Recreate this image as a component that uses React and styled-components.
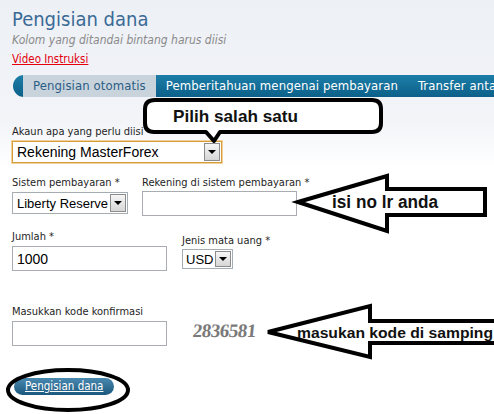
import React from "react";
import styled, { createGlobalStyle } from "styled-components";

const GlobalStyle = createGlobalStyle`
  html, body {
    margin: 0;
    padding: 0;
    background: #ffffff;
  }
  * {
    box-sizing: border-box;
  }
`;

const uiFont = `"DejaVu Sans Condensed", "DejaVu Sans", sans-serif`;
const fieldFont = `"Liberation Sans", Arial, sans-serif`;

const Page = styled.div`
  position: relative;
  width: 494px;
  height: 414px;
  overflow: hidden;
  padding: 7px 0 0 12px;
  font-family: ${uiFont};
  font-stretch: condensed;
  background: linear-gradient(#edf0f5 0px, #f2f4f8 120px, #ffffff 168px);
`;

const Title = styled.h1`
  margin: 0;
  font-size: 20px;
  line-height: 24px;
  font-weight: normal;
  color: #3b6a96;
`;

const Subtitle = styled.div`
  margin-top: 2px;
  font-size: 12px;
  line-height: 15px;
  font-style: italic;
  color: #8a8a8a;
`;

const VideoLink = styled.a`
  display: inline-block;
  margin-top: 2px;
  font-size: 11.5px;
  line-height: 14px;
  color: #e4000f;
  text-decoration: underline;
`;

const TabBar = styled.div`
  display: flex;
  margin: 8px 0 0 1px;
  height: 22px;
  padding-left: 10px;
  border-radius: 11px 0 0 11px;
  background: linear-gradient(#1d7ea8, #0b6089);
  white-space: nowrap;
`;

const Tab = styled.div`
  padding: 0 10px;
  line-height: 22px;
  font-size: 13px;
  letter-spacing: 0.1px;
  color: ${({ $active }) => ($active ? "#2b5d86" : "#ffffff")};
  background: ${({ $active }) => ($active ? "#c9d3dc" : "transparent")};
`;

const Form = styled.div`
  display: flex;
  flex-direction: column;
  margin-top: 28px;
`;

const Row = styled.div`
  display: flex;
  align-items: flex-start;
  gap: ${({ $gap }) => $gap ?? 14}px;
  margin-top: ${({ $top }) => $top ?? 0}px;
`;

const Field = styled.div`
  display: flex;
  flex-direction: column;
  margin-top: ${({ $top }) => $top ?? 0}px;
`;

const Label = styled.label`
  font-size: 11px;
  line-height: 13px;
  color: #1e1e1e;
  margin-bottom: ${({ $gap }) => $gap ?? 3}px;
`;

const TextInput = styled.input`
  width: ${({ $w }) => $w}px;
  height: 25px;
  padding: 0 4px;
  border: 1px solid #a9adb2;
  background: #ffffff;
  font-family: ${fieldFont};
  font-size: 14px;
  color: #000;
  outline: none;
`;

const SelectBox = styled.div`
  display: flex;
  align-items: center;
  width: ${({ $w }) => $w}px;
  height: ${({ $h }) => $h ?? 22}px;
  padding: 1px 1px 1px ${({ $pad }) => $pad ?? 4}px;
  background: #ffffff;
  border: 1px solid ${({ $focus }) => ($focus ? "#d69b3a" : "#a5acb2")};
  box-shadow: ${({ $focus }) => ($focus ? "0 0 0 1px #f1d29a" : "none")};
  font-family: ${fieldFont};
  font-size: ${({ $size }) => $size ?? 14}px;
  color: #000;
`;

const SelectText = styled.span`
  flex: 1;
  white-space: nowrap;
  overflow: hidden;
`;

const DropButton = styled.span`
  position: relative;
  flex: none;
  width: 16px;
  height: 100%;
  border: 1px solid #8c8c8c;
  background: linear-gradient(#f6f6f6, #d6d6d6);

  &::after {
    content: "";
    position: absolute;
    left: 50%;
    top: 50%;
    margin: -2px 0 0 -4px;
    border-left: 4px solid transparent;
    border-right: 4px solid transparent;
    border-top: 4px solid #000;
  }
`;

const Captcha = styled.div`
  margin: 15px 0 0 26px;
  font-family: "Liberation Serif", serif;
  font-weight: bold;
  font-size: 19px;
  letter-spacing: -0.5px;
  color: #7a7a7a;
  transform: skewX(-6deg);
`;

const SubmitButton = styled.a`
  align-self: flex-start;
  margin: 32px 0 0 2px;
  padding: 0 11px;
  height: 17px;
  line-height: 17px;
  border-radius: 9px;
  background: linear-gradient(#4a89b0, #1b587e);
  color: #ffffff;
  font-size: 11.5px;
  text-decoration: underline;
`;

const Overlay = styled.svg`
  position: absolute;
  left: 0;
  top: 0;
  pointer-events: none;
  font-family: "Liberation Sans", Arial, sans-serif;
  font-weight: bold;
`;

function Select({ value, width, height, focus, size, pad }) {
  return (
    <SelectBox $w={width} $h={height} $focus={focus} $size={size} $pad={pad}>
      <SelectText>{value}</SelectText>
      <DropButton />
    </SelectBox>
  );
}

function Annotations() {
  return (
    <Overlay width="494" height="414" viewBox="0 0 494 414">
      <path
        d="M155 100 H372 Q381 100 381 109 V123 Q381 132 372 132 H220 L214 141 L206 132 H154 Q145 132 145 123 V109 Q145 100 155 100 Z"
        fill="#ffffff"
        stroke="#000"
        strokeWidth="4"
        strokeLinejoin="round"
      />
      <text x="173" y="122" fontSize="17" fill="#111" textLength="125" lengthAdjust="spacingAndGlyphs">
        Pilih salah satu
      </text>

      <path
        d="M298 202 L387 176 L387 189 L485 189 L485 215 L387 215 L387 231 Z"
        fill="#ffffff"
        stroke="#000"
        strokeWidth="4"
        strokeLinejoin="miter"
      />
      <text x="332" y="208" fontSize="18" fill="#111" textLength="106" lengthAdjust="spacingAndGlyphs">
        isi no lr anda
      </text>

      <path
        d="M268 332 L370 306 L370 321 L502 321 L502 343 L370 343 L370 357 Z"
        fill="#ffffff"
        stroke="#000"
        strokeWidth="4"
        strokeLinejoin="miter"
      />
      <text x="297" y="338" fontSize="14" fill="#111" textLength="196" lengthAdjust="spacingAndGlyphs">
        masukan kode di samping
      </text>

      <ellipse cx="68" cy="390" rx="60" ry="20" fill="none" stroke="#000" strokeWidth="4" />
    </Overlay>
  );
}

export default function App() {
  return (
    <>
      <GlobalStyle />
      <Page>
        <Title>Pengisian dana</Title>
        <Subtitle>Kolom yang ditandai bintang harus diisi</Subtitle>
        <VideoLink href="#">Video Instruksi</VideoLink>

        <TabBar>
          <Tab $active>Pengisian otomatis</Tab>
          <Tab>Pemberitahuan mengenai pembayaran</Tab>
          <Tab>Transfer antar akun</Tab>
        </TabBar>

        <Form>
          <Field>
            <Label>Akaun apa yang perlu diisi</Label>
            <Select value="Rekening MasterForex" width={210} focus />
          </Field>

          <Row $top={13} $gap={14}>
            <Field>
              <Label $gap={3}>Sistem pembayaran *</Label>
              <Select value="Liberty Reserve" width={116} size={13} />
            </Field>
            <Field>
              <Label $gap={2}>Rekening di sistem pembayaran *</Label>
              <TextInput $w={155} defaultValue="" />
            </Field>
          </Row>

          <Row $top={14} $gap={15}>
            <Field>
              <Label>Jumlah *</Label>
              <TextInput $w={155} defaultValue="1000" />
            </Field>
            <Field $top={4}>
              <Label $gap={2}>Jenis mata uang *</Label>
              <Select value="USD" width={51} height={20} size={13} pad={3} />
            </Field>
          </Row>

          <Row $top={34} $gap={0}>
            <Field>
              <Label>Masukkan kode konfirmasi</Label>
              <TextInput $w={155} defaultValue="" />
            </Field>
            <Captcha>2836581</Captcha>
          </Row>

          <SubmitButton href="#">Pengisian dana</SubmitButton>
        </Form>

        <Annotations />
      </Page>
    </>
  );
}
